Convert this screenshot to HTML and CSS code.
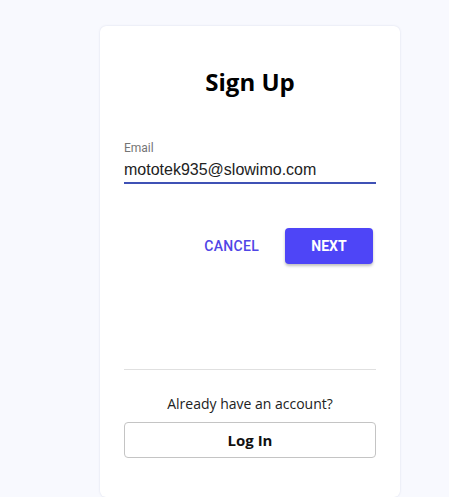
FILE: index.html
```html
<!DOCTYPE html>
<html>
<head>
<meta charset="utf-8">
<link rel="stylesheet" href="styles.css">
</head>
<body>
<div class="card">
  <h1 class="title">Sign Up</h1>
  <div class="field">
    <label class="field-label">Email</label>
    <div class="field-input">mototek935@slowimo.com</div>
  </div>
  <div class="actions">
    <button class="btn-text">CANCEL</button>
    <button class="btn-primary">NEXT</button>
  </div>
  <div class="spacer"></div>
  <hr class="divider">
  <p class="prompt">Already have an account?</p>
  <button class="btn-outline">Log In</button>
</div>
</body>
</html>
```
FILE: styles.css
```css
html, body {
  margin: 0;
  padding: 0;
}
body {
  background: #f8f9fe;
  height: 497px;
  overflow: hidden;
}
.card {
  box-sizing: border-box;
  margin: 26px 0 0 100px;
  width: 300px;
  height: 471px;
  background: #fff;
  border-radius: 6px;
  box-shadow: 0 0 2px rgba(60, 70, 140, 0.18);
  padding: 40px 24px 0;
  display: flex;
  flex-direction: column;
}
.title {
  margin: 0;
  font-family: "Open Sans", sans-serif;
  font-weight: 700;
  font-size: 24px;
  line-height: 32px;
  text-align: center;
  color: #000;
}
.field {
  margin-top: 43px;
  display: flex;
  flex-direction: column;
}
.field-label {
  font-family: Roboto, sans-serif;
  font-size: 12px;
  line-height: 14px;
  color: #757575;
}
.field-input {
  margin-top: 5px;
  font-family: "Liberation Sans", Arial, sans-serif;
  font-size: 16px;
  line-height: 19px;
  color: #222;
  padding-bottom: 3px;
  border-bottom: 2px solid #3f51b5;
}
.actions {
  margin-top: 44px;
  display: flex;
  justify-content: flex-end;
  align-items: center;
  gap: 18px;
}
.btn-text {
  background: none;
  border: 0;
  padding: 6px 8px;
  font-family: Roboto, sans-serif;
  font-weight: 500;
  font-size: 14px;
  letter-spacing: 0.02em;
  color: #5046e6;
}
.btn-primary {
  width: 88px;
  height: 36px;
  margin-right: 3px;
  border: 0;
  border-radius: 4px;
  background: #4e45f7;
  color: #fff;
  font-family: Roboto, sans-serif;
  font-weight: 700;
  font-size: 14px;
  box-shadow: 0 2px 3px rgba(0, 0, 0, 0.25);
}
.spacer {
  flex: 0 0 105px;
}
.divider {
  margin: 0;
  border: 0;
  border-top: 1px solid #e0e0e0;
}
.prompt {
  margin: 24px 0 0;
  font-family: "Open Sans", sans-serif;
  font-size: 14px;
  line-height: 20px;
  text-align: center;
  color: #222;
}
.btn-outline {
  margin-top: 8px;
  height: 36px;
  background: #fff;
  border: 1px solid #c4c4c4;
  border-radius: 4px;
  font-family: "Open Sans", sans-serif;
  font-weight: 700;
  font-size: 15px;
  color: #111;
}
```
